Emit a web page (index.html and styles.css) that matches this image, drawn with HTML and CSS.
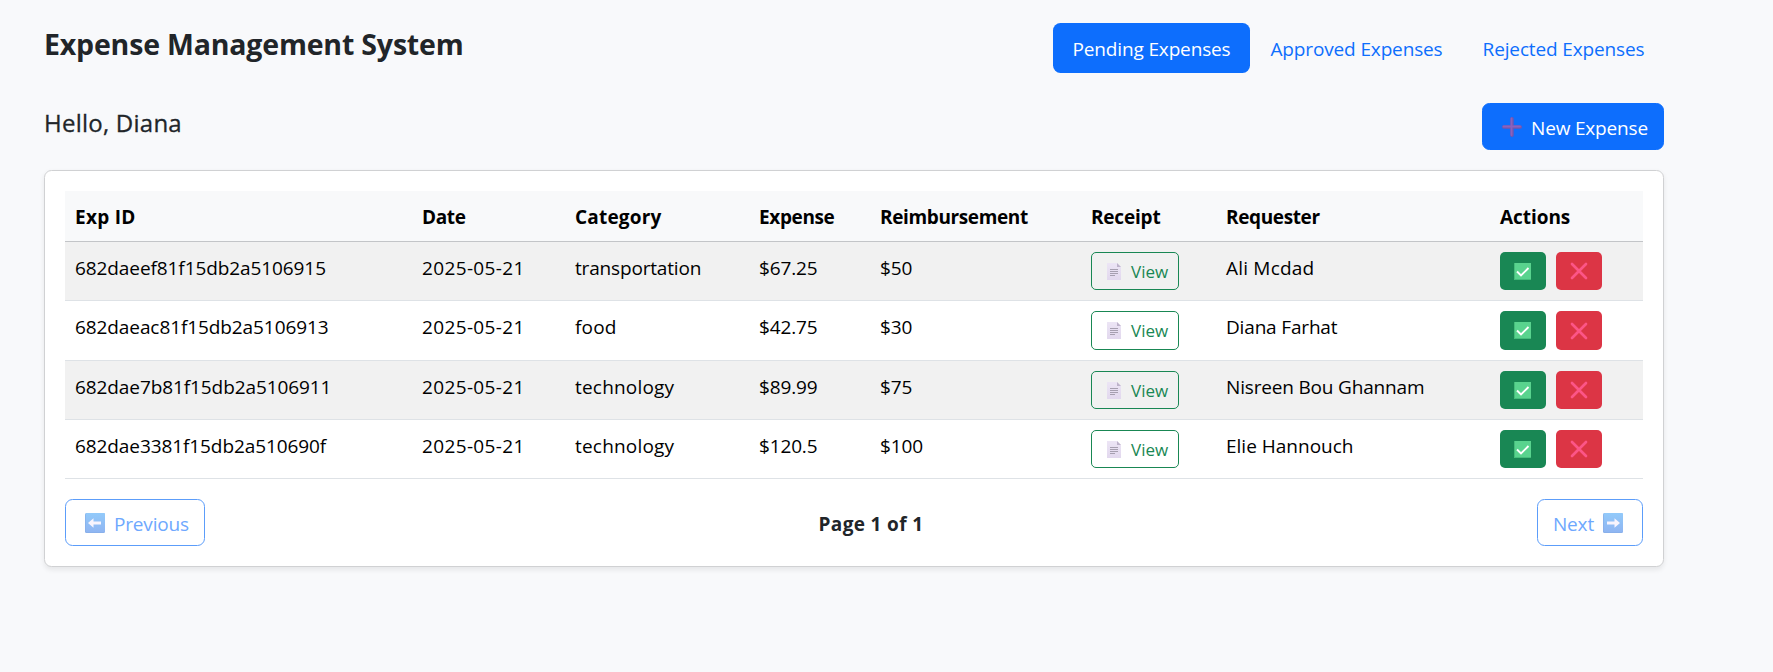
FILE: index.html
```html
<!DOCTYPE html>
<html lang="en">
<head>
<meta charset="utf-8">
<title>Expense Management System</title>
<link rel="stylesheet" href="styles.css">
</head>
<body>
<svg class="sprite" width="0" height="0" aria-hidden="true">
  <defs>
    <linearGradient id="blue" x1="0" y1="0" x2="0" y2="1"><stop offset="0" stop-color="#92cafa"/><stop offset="1" stop-color="#8fb5f2"/></linearGradient>
    <linearGradient id="paper" x1="0" y1="0" x2="0" y2="1"><stop offset="0" stop-color="#ece5f5"/><stop offset="1" stop-color="#e2d8ee"/></linearGradient>
  </defs>
  <symbol id="doc" viewBox="0 0 14 17"><path d="M0 0h10l4 4v13H0z" fill="url(#paper)"/><path d="M10 0v4h4z" fill="#beb3cb"/><path d="M3 6.5h8M3 8.5h8M3 10.5h8M3 12.5h5" stroke="#a69fb0" stroke-width="1"/></symbol>
  <symbol id="check" viewBox="0 0 17 17"><path d="M0 0h17v17H0z" fill="#45bd7b"/><path d="M1 0h16v16H1z" fill="#59d38e"/><path d="M3 8.5l4 4 7.5-7.5" fill="none" stroke="#fff" stroke-width="1.9"/></symbol>
  <symbol id="cross" viewBox="0 0 18 18"><path d="M2 2l14 14M16 2L2 16" stroke="#fc5587" stroke-width="2.7" stroke-linecap="round"/></symbol>
  <symbol id="plus" viewBox="0 0 20 20"><path d="M10 1.700v16.600M1.700 10h16.600" stroke="#7355ad" stroke-width="3.400" stroke-linecap="round"/><path d="M9.500 1.500v16.500M1.500 9.500h16.500" stroke="#8b62bd" stroke-width="1.800" stroke-linecap="round"/></symbol>
  <symbol id="left" viewBox="0 0 20 20"><rect width="20" height="20" rx="1.500" fill="#87aee8"/><rect x=".7" width="19.300" height="19.300" rx="1.200" fill="url(#blue)"/><path d="M3 10l5.500-4.700v3.300h7.500v2.800H8.500v3.300z" fill="#f7f4fd"/></symbol>
  <symbol id="right" viewBox="0 0 20 20"><rect width="20" height="20" rx="1.500" fill="#87aee8"/><rect x=".7" width="19.300" height="19.300" rx="1.200" fill="url(#blue)"/><path d="M17 10l-5.500-4.700v3.300H4v2.800h7.500v3.300z" fill="#f7f4fd"/></symbol>
</svg>
<main class="page">
  <header class="topbar">
    <h1 class="title">Expense Management System</h1>
    <nav class="tabs">
      <a class="tab tab-active">Pending Expenses</a>
      <a class="tab tab-approved">Approved Expenses</a>
      <a class="tab tab-rejected">Rejected Expenses</a>
    </nav>
  </header>
  <div class="greeting">
    <h2 class="hello">Hello, Diana</h2>
    <button class="btn btn-new"><svg class="icon"><use href="#plus"/></svg><span>New Expense</span></button>
  </div>
  <section class="card">
    <table class="table">
      <colgroup><col class="c-id"><col class="c-date"><col class="c-cat"><col class="c-exp"><col class="c-reimb"><col class="c-receipt"><col class="c-req"><col class="c-act"></colgroup>
      <thead><tr><th class="id-head">Exp ID</th><th>Date</th><th class="cat-head">Category</th><th>Expense</th><th>Reimbursement</th><th class="receipt-head">Receipt</th><th>Requester</th><th class="act-head">Actions</th></tr></thead>
      <tbody>
        <tr><td class="id">682daeef81f15db2a5106915</td><td class="date">2025-05-21</td><td class="trim">transportation</td><td class="amount">$67.25</td><td class="amount">$50</td>
          <td><button class="view"><svg class="icon-doc"><use href="#doc"/></svg><span>View</span></button></td><td class="loose">Ali Mcdad</td>
          <td><div class="actions"><button class="act approve"><svg class="icon-check"><use href="#check"/></svg></button><button class="act reject"><svg class="icon-cross"><use href="#cross"/></svg></button></div></td></tr>
        <tr><td class="id">682daeac81f15db2a5106913</td><td class="date">2025-05-21</td><td class="loose">food</td><td class="amount">$42.75</td><td class="amount">$30</td>
          <td><button class="view"><svg class="icon-doc"><use href="#doc"/></svg><span>View</span></button></td><td class="trim">Diana Farhat</td>
          <td><div class="actions"><button class="act approve"><svg class="icon-check"><use href="#check"/></svg></button><button class="act reject"><svg class="icon-cross"><use href="#cross"/></svg></button></div></td></tr>
        <tr><td class="id">682dae7b81f15db2a5106911</td><td class="date">2025-05-21</td><td class="loose">technology</td><td class="amount">$89.99</td><td class="amount">$75</td>
          <td><button class="view"><svg class="icon-doc"><use href="#doc"/></svg><span>View</span></button></td><td class="trim">Nisreen Bou Ghannam</td>
          <td><div class="actions"><button class="act approve"><svg class="icon-check"><use href="#check"/></svg></button><button class="act reject"><svg class="icon-cross"><use href="#cross"/></svg></button></div></td></tr>
        <tr><td class="id">682dae3381f15db2a510690f</td><td class="date">2025-05-21</td><td class="loose">technology</td><td class="amount">$120.5</td><td class="amount">$100</td>
          <td><button class="view"><svg class="icon-doc"><use href="#doc"/></svg><span>View</span></button></td><td>Elie Hannouch</td>
          <td><div class="actions"><button class="act approve"><svg class="icon-check"><use href="#check"/></svg></button><button class="act reject"><svg class="icon-cross"><use href="#cross"/></svg></button></div></td></tr>
      </tbody>
    </table>
    <footer class="pager">
      <button class="btn btn-prev"><svg class="icon"><use href="#left"/></svg><span>Previous</span></button>
      <strong class="page-count">Page 1 of 1</strong>
      <button class="btn btn-next"><span>Next</span><svg class="icon"><use href="#right"/></svg></button>
    </footer>
  </section>
</main>
</body>
</html>
```

FILE: styles.css
```css
* { box-sizing: border-box; }
body { margin: 0; min-height: 672px; background: #f8f9fb; color: #212529; font: 19px/30px "Open Sans", "Noto Sans", sans-serif; white-space: nowrap; overflow: hidden; }
button { font: inherit; margin: 0; padding: 0; cursor: pointer; }
svg { display: block; flex: none; }
.sprite { position: absolute; }
.page { width: 1620px; margin-left: 44px; padding-top: 23px; }
.topbar { display: flex; justify-content: space-between; height: 50px; }
.title { margin: 3px 0 0; font-size: 28.5px; line-height: 36px; font-weight: 700; letter-spacing: -0.18px; }
.tabs { display: flex; }
.tab { display: flex; justify-content: center; padding: 11px 0 9px; color: #0d6efd; border-radius: 7.5px; letter-spacing: -0.14px; }
.tab-active { width: 197px; color: #fff; background: #0d6efd; }
.tab-approved { width: 213px; }
.tab-rejected { width: 201px; }
.greeting { display: flex; justify-content: space-between; height: 47px; margin: 30px 0 20px; }
.hello { margin: 5px 0 0; font-size: 24px; line-height: 30px; font-weight: 500; letter-spacing: 0.24px; -webkit-text-stroke: 0.3px #212529; }
.btn { display: flex; align-items: center; height: 47px; border-radius: 7.5px; border: 1px solid #5c9dfa; background: transparent; color: #6ea8fe; }
.btn span { padding-top: 3px; letter-spacing: -0.17px; }
.icon { width: 20px; height: 20px; }
.btn-new { width: 182px; padding-left: 19px; gap: 9px; color: #fff; background: #0d6efd; border-color: #0d6efd; }
.card { height: 397px; padding: 20px; background: #fff; border: 1px solid #d0d1d3; border-radius: 7.5px; box-shadow: 0 2.5px 5px rgba(0, 0, 0, .075); }
.table { width: 1578px; table-layout: fixed; border-collapse: separate; border-spacing: 0; color: #000; }
.c-id { width: 347px; }
.c-date { width: 153px; }
.c-cat { width: 184px; }
.c-exp { width: 121px; }
.c-reimb { width: 211px; }
.c-receipt { width: 135px; }
.c-req { width: 274px; }
.c-act { width: 153px; }
.table th { height: 51px; padding: 2px 10px 0; text-align: left; font-weight: 700; letter-spacing: -0.37px; background: #f8f9fa; border-bottom: 1px solid #c3c5c8; }
.table .id-head { letter-spacing: 0.3px; }
.table .cat-head { letter-spacing: 0.2px; }
.table .receipt-head { letter-spacing: -0.2px; }
.table .act-head { letter-spacing: -0.05px; }
.table td { height: 59px; padding: 10px; vertical-align: top; border-bottom: 1px solid #dee2e6; line-height: 33px; }
.table tbody tr:nth-child(odd) td { background: #f1f1f1; }
.table tbody tr:nth-child(2) td { height: 60px; }
.table .id { letter-spacing: -0.09px; }
.table .date { letter-spacing: 0.36px; }
.table .amount { letter-spacing: -0.15px; }
.table .trim { letter-spacing: -0.17px; }
.table .loose { letter-spacing: 0.2px; }
.view { display: flex; align-items: center; width: 88px; height: 38px; padding-left: 15px; gap: 10px; color: #198754; background: transparent; border: 1px solid #198754; border-radius: 5px; font-size: 17px; letter-spacing: 0; }
tr:nth-child(2) .view, tr:nth-child(2) .act { height: 39px; }
.icon-doc { width: 14px; height: 17px; }
.actions { display: flex; gap: 10px; }
.act { display: flex; align-items: center; justify-content: center; width: 46px; height: 38px; border: 0; border-radius: 5px; }
.approve { background: #198754; }
.reject { background: #dc3545; }
.icon-check { width: 17px; height: 17px; margin-right: 1px; }
.icon-cross { width: 18px; height: 18px; }
.pager { display: flex; justify-content: space-between; align-items: center; margin-top: 20px; }
.btn-prev { width: 140px; padding-left: 19px; gap: 9px; }
.btn-next { width: 106px; padding-left: 15px; gap: 9px; }
.page-count { padding-top: 2px; font-weight: 700; letter-spacing: 0.36px; }
```
